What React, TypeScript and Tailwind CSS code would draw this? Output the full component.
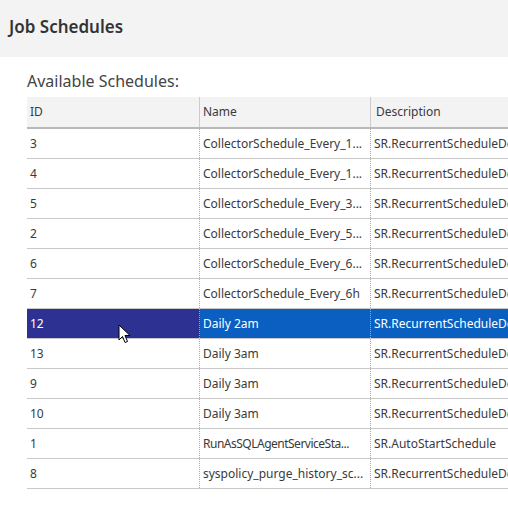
import React from 'react';

type Schedule = { id: string; name: string; description: string; tight?: boolean };

// names as the grid shows them (column is too narrow for the full value)
const schedules: Schedule[] = [
  { id: '3', name: 'CollectorSchedule_Every_1...', description: 'SR.RecurrentScheduleDescription' },
  { id: '4', name: 'CollectorSchedule_Every_1...', description: 'SR.RecurrentScheduleDescription' },
  { id: '5', name: 'CollectorSchedule_Every_3...', description: 'SR.RecurrentScheduleDescription' },
  { id: '2', name: 'CollectorSchedule_Every_5...', description: 'SR.RecurrentScheduleDescription' },
  { id: '6', name: 'CollectorSchedule_Every_6...', description: 'SR.RecurrentScheduleDescription' },
  { id: '7', name: 'CollectorSchedule_Every_6h', description: 'SR.RecurrentScheduleDescription' },
  { id: '12', name: 'Daily 2am', description: 'SR.RecurrentScheduleDescription' },
  { id: '13', name: 'Daily 3am', description: 'SR.RecurrentScheduleDescription' },
  { id: '9', name: 'Daily 3am', description: 'SR.RecurrentScheduleDescription' },
  { id: '10', name: 'Daily 3am', description: 'SR.RecurrentScheduleDescription' },
  { id: '1', name: 'RunAsSQLAgentServiceSta...', description: 'SR.AutoStartSchedule', tight: true },
  { id: '8', name: 'syspolicy_purge_history_sc...', description: 'SR.RecurrentScheduleDescription' },
];

function Cursor() {
  return (
    <svg width="14" height="20" viewBox="0 0 14 20" className="absolute left-[91px] top-[15px] pointer-events-none">
      <path
        d="M1 1 L1 16 L4.5 12.5 L7 18.5 L9.5 17.5 L7 11.5 L12 11.5 Z"
        fill="#ffffff"
        stroke="#000000"
        strokeWidth="1"
        strokeLinejoin="round"
      />
    </svg>
  );
}

export default function App() {
  const selectedId = '12';

  return (
    <div className="w-[508px] h-[513px] bg-white overflow-hidden text-[#3a3a3a]" style={{ fontFamily: '"Noto Sans", "Open Sans", sans-serif' }}>
      {/* Title bar */}
      <div className="h-[57px] bg-[#f3f3f3] flex items-center pl-[9px]">
        <h1 className="text-[17px] font-semibold text-[#333333] -mt-[3px]">Job Schedules</h1>
      </div>

      <div className="pl-[27px] pt-[12px]">
        <p className="text-[16px] text-[#444444] leading-[24px] mb-[4px]">Available Schedules:</p>

        <div className="w-[481px] overflow-hidden">
          {/* header */}
          <div className="flex w-[620px] h-[32px] bg-[#f3f3f3] border-b-2 border-[#b9b9b9] text-[12px] items-center">
            <div className="w-[173px] h-full flex items-center pl-[3px] border-r border-[#cccccc]">ID</div>
            <div className="w-[171px] h-full flex items-center pl-[3px] border-r border-[#cccccc]">Name</div>
            <div className="flex-1 pl-[5px]">Description</div>
          </div>
          {/* rows */}
          {schedules.map((s) => {
            const selected = s.id === selectedId;
            return (
              <div key={s.id} className="flex w-[620px] h-[30px] border-b border-[#c9c9c9] text-[12px]">
                <div className={`relative w-[173px] shrink-0 flex items-center pl-[3px] border-r border-dotted border-[#aaaaaa] ${selected ? 'bg-[#2d3192] text-white' : ''}`}>
                  {s.id}
                  {selected && <Cursor />}
                </div>
                <div className={`w-[171px] shrink-0 flex items-center pl-[3px] pr-[2px] border-r border-dotted border-[#aaaaaa] ${selected ? 'bg-[#0a5fc0] text-white' : ''}`}>
                  <span className={`whitespace-nowrap ${s.tight ? 'tracking-[-0.5px]' : ''}`}>{s.name}</span>
                </div>
                <div className={`flex-1 min-w-0 flex items-center pl-[3px] ${selected ? 'bg-[#0a5fc0] text-white' : ''}`}>
                  <span className="whitespace-nowrap">{s.description}</span>
                </div>
              </div>
            );
          })}
        </div>
      </div>
    </div>
  );
}
